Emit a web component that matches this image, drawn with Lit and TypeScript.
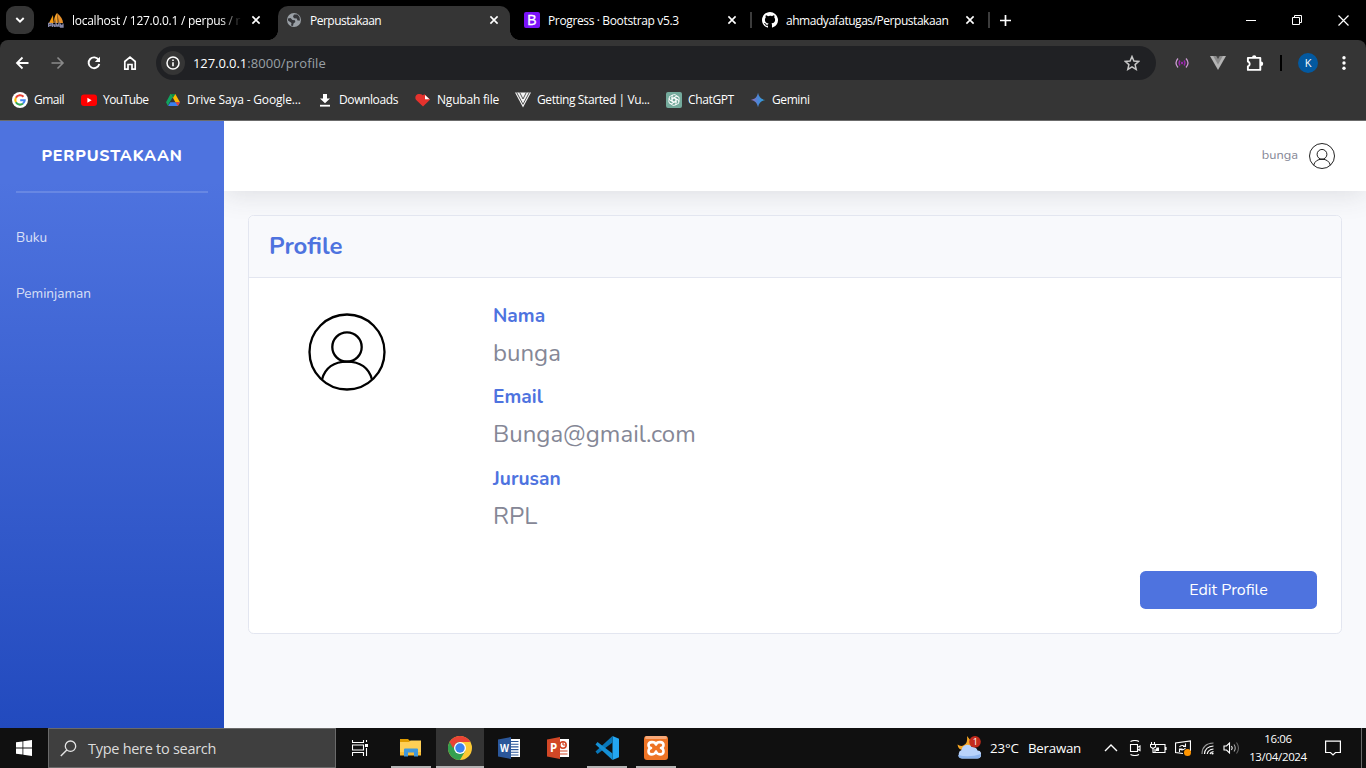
import { LitElement, html, css, svg, TemplateResult } from "lit";
import { customElement } from "lit/decorators.js";
import { styleMap } from "lit/directives/style-map.js";

const icon = (w: number, h: number, body: unknown, box = `0 0 ${w} ${h}`) =>
  html`<svg width=${w} height=${h} viewBox=${box} fill="none">${body}</svg>`;

const closeX = icon(10, 10, svg`<path d="M1.4 1.4 8.6 8.6M8.6 1.4 1.4 8.6" stroke="#fff" stroke-width="1.6"/>`);

const sails = icon(16, 16, svg`
  <path d="M1 11 5 3 5.500 11Z" fill="#f89c0e"/><path d="M5.500 11C6 7 7 3 9 1L10 11Z" fill="#f5a12a"/>
  <path d="M9 1C13 4 15 8 15 11H10.500Z" fill="#e8912b"/><path d="M5.500 11 7 6 8 11ZM9.500 11 10 5 11.500 11Z" fill="#8a5a22"/>
  <path d="M.5 15V11.500H3V13.500H1M4.500 11V15M4.500 13H6.500V15M8 15V11.500L9.500 14 11 11.500V15M12.500 11.500V15H15V11.500M12.500 13.500H15" stroke="#8587a8" stroke-width="1.300"/>`);

const globe = icon(16, 16, svg`
  <circle cx="8" cy="8" r="7" fill="#9aa0a6"/>
  <path d="M2 6.500 4.500 6 6.500 8 9 8.300 9.300 10 7.500 11.500 7 14 5 13.500 5.500 11 2 8.500ZM8 2.500 11.500 2.500 13.500 5 14 8.500 11.500 8.500 10.800 6.500 8 6.300 7 4.500Z" fill="#35363a"/>`);

const bootstrapMark = html`<span class="bs">B</span>`;

const github = icon(16, 16, svg`<path fill="#fff" d="M8 0C3.580 0 0 3.580 0 8c0 3.540 2.290 6.530 5.470 7.590.4.070.55-.17.55-.38 0-.19-.01-.82-.01-1.490-2.010.37-2.530-.49-2.690-.94-.09-.23-.48-.94-.82-1.130-.28-.15-.68-.52-.01-.53.63-.01 1.080.58 1.230.82.72 1.210 1.870.87 2.330.66.07-.52.28-.87.51-1.070-1.780-.2-3.640-.89-3.640-3.950 0-.87.31-1.590.82-2.150-.08-.2-.36-1.020.08-2.120 0 0 .67-.21 2.200.82A7.400 7.400 0 0 1 8 3.860c.68 0 1.360.09 2 .27 1.530-1.040 2.200-.82 2.200-.82.44 1.100.16 1.920.08 2.120.51.56.82 1.270.82 2.150 0 3.070-1.870 3.750-3.650 3.950.29.25.54.73.54 1.480 0 1.070-.01 1.930-.01 2.200 0 .21.15.46.55.38A8 8 0 0 0 8 0"/>`);

const google = icon(16, 16, svg`
  <circle cx="8" cy="8" r="8" fill="#fff"/>
  <g stroke-width="2.100"><path d="M11.500 4.700A4.700 4.700 0 0 0 3.900 5.700" stroke="#ea4335"/>
  <path d="M3.900 5.700A4.700 4.700 0 0 0 3.900 10.300" stroke="#fbbc05"/>
  <path d="M3.900 10.300A4.700 4.700 0 0 0 11 11.500" stroke="#34a853"/>
  <path d="M11 11.500A4.700 4.700 0 0 0 12.700 8.200H8.200" stroke="#4285f4"/></g>`);

const youtube = icon(16, 16, svg`<rect x="0" y="2.500" width="16" height="11.500" rx="3" fill="#f00"/><path d="M6.400 5.700 10.600 8.200 6.400 10.700Z" fill="#fff"/>`);

const drive = icon(16, 16, svg`
  <path d="M5.500 2H9.700L4.200 11 3 14 1 10.200Z" fill="#11a35f"/><path d="M5.700 2H10.300L15 10.300H10.400Z" fill="#ffba00"/>
  <path d="M5.500 2H10.300L8 6Z" fill="#0a8a47"/>
  <path d="M5.300 10.300H15L12.900 14H3.100Z" fill="#3b80f0"/><path d="M10.400 10.300H15L12.900 14Z" fill="#ea4335"/>`);

const download = icon(16, 16, svg`<path d="M6 2H10V6.500H13L8 11.300 3 6.500H6Z" fill="#fff"/><path d="M3 13.700H13" stroke="#fff" stroke-width="1.800"/>`);

const heart = icon(16, 16, svg`<path d="M8 14.500 1.200 8A4 4 0 0 1 1 3.500C2.600 1.700 6 1.700 7.800 3.200L9.500 2.200 15.200 7.500Z" fill="#e5322d"/><path d="M10 3V7.300H14.500Z" fill="#fff"/>`);

const vueMark = icon(16, 16, svg`
  <path d="M0 .5H16L8 15.500Z" fill="#f4f4f4"/>
  <path d="M1.700 .5 8 12.300 14.300 .5M4.700 .5 8 7 11.300 .5" stroke="#444" stroke-width=".9"/>`);

const gpt = icon(16, 16, svg`
  <rect width="16" height="16" rx="2" fill="#74aa9c"/>
  <g stroke="#fff" stroke-width=".9">${[0, 60, 120, 180, 240, 300].map((a) => svg`<path transform="rotate(${a} 8 8)" d="M6 9.200V4.700A2.300 2.300 0 0 1 10 3.300L12 4.600M6.200 6.800 9.700 4.800"/>`)}</g>`);

const gemini = icon(16, 16, svg`
  <defs><linearGradient id="gm" x1="0" y1="0" x2="1" y2="0"><stop offset="0" stop-color="#9a6bb8"/><stop offset=".5" stop-color="#4a86d8"/><stop offset="1" stop-color="#2ba5d8"/></linearGradient></defs>
  <path d="M8 .8C8.800 5 11 7.200 15.200 8 11 8.800 8.800 11 8 15.200 7.200 11 5 8.800 .8 8 5 7.200 7.200 5 8 .8Z" fill="url(#gm)"/>`);

interface Tab { title: string; fav: TemplateResult; track: number; active?: boolean; fade?: boolean; sep?: boolean; }
const tabs: Tab[] = [
  { title: "localhost / 127.0.0.1 / perpus / r", fav: sails, track: -0.26, fade: true },
  { title: "Perpustakaan", fav: globe, track: -0.5, active: true },
  { title: "Progress · Bootstrap v5.3", fav: bootstrapMark, track: -0.36, sep: true },
  { title: "ahmadyafatugas/Perpustakaan", fav: github, track: -0.46, sep: true },
];

const bookmarks: { name: string; ic: TemplateResult; w: number; track: number }[] = [
  { name: "Gmail", ic: google, w: 69, track: -0.5 },
  { name: "YouTube", ic: youtube, w: 84, track: -0.55 },
  { name: "Drive Saya - Google...", ic: drive, w: 152, track: -0.17 },
  { name: "Downloads", ic: download, w: 98, track: -0.4 },
  { name: "Ngubah file", ic: heart, w: 100, track: -0.2 },
  { name: "Getting Started | Vu...", ic: vueMark, w: 151, track: -0.4 },
  { name: "ChatGPT", ic: gpt, w: 84, track: -0.37 },
  { name: "Gemini", ic: gemini, w: 60, track: -0.4 },
];

@customElement("browser-chrome")
export class BrowserChrome extends LitElement {
  static styles = css`
    :host { display: block; height: 121px; box-sizing: border-box; background: #353535; border-bottom: 1px solid #6b6b6b;
      font: 12px/16px "Open Sans", "Noto Sans", sans-serif; color: #fff; }
    svg { display: block; flex: none; }
    .strip { display: flex; height: 40px; background: #000; }
    .search { width: 28px; height: 28px; margin: 6px 12px 0 6px; border-radius: 9px; background: #353535; display: grid; place-items: center; flex: none; }
    .tab { position: relative; box-sizing: border-box; display: flex; align-items: center; width: 238px; height: 40px; padding: 0 14px 0 11px; flex: none; }
    .tab.first { width: 226px; padding: 0 11px 0 2px; }
    .tab.active { width: 244px; padding: 0 17px 0 14px; margin-right: -3px; }
    .tab.active::before { content: ""; position: absolute; inset: 6px 6px 0 6px; background: #353535; border-radius: 10px 10px 0 0; }
    .tab.active::after { content: ""; position: absolute; left: -4px; right: -4px; bottom: 0; height: 10px;
      background: radial-gradient(circle at 0 0, transparent 9.600px, #353535 10.200px) left / 10px 10px no-repeat,
        radial-gradient(circle at 100% 0, transparent 9.600px, #353535 10.200px) right / 10px 10px no-repeat; }
    .tab > * { position: relative; }
    .title { flex: 1; margin: 0 8px; padding-top: 1px; white-space: nowrap; overflow: hidden; }
    .fade { -webkit-mask-image: linear-gradient(90deg, #000 148px, transparent 170px); }
    .tab > .sep { position: absolute; right: -1px; top: 12px; width: 2px; height: 16px; background: #3c3c3c; }
    .bs { display: block; width: 16px; height: 16px; border-radius: 2px; background: #7a12f8; font: 400 14px/16px "Liberation Sans", sans-serif; text-align: center; -webkit-text-stroke: .3px #fff; }
    .plus { margin: 15px 0 0 11px; }
    .win { margin: 0 0 0 auto; display: flex; align-items: center; }
    .win span { width: 46px; display: grid; place-items: center; }
    .bar { display: flex; align-items: center; height: 46px; background: #353535; border-radius: 8px 8px 0 0; }
    .under { background: #000; }
    .nav { display: flex; width: 156px; flex: none; }
    .nav span { width: 36px; display: grid; place-items: center; }
    .nav span:first-child { margin-left: 4px; }
    .omni { box-sizing: border-box; display: flex; align-items: center; width: 1000px; height: 34px; border-radius: 17px; background: #202124; padding: 0 16px 0 5px; font-size: 13px; flex: none; }
    .info { width: 24px; height: 24px; border-radius: 50%; background: #353535; display: grid; place-items: center; margin-right: 8px; }
    .url { flex: 1; }
    .path { color: #9aa0a6; letter-spacing: .12px; }
    .host { letter-spacing: -.08px; }
    .ext { flex: 1; display: flex; align-items: center; }
    .ext span { display: grid; place-items: center; width: 36px; flex: none; }
    .ext span:first-child { margin-left: 8px; }
    .ext .puzzle { padding-left: 1px; width: 35px; }
    .ext .rule { width: 2px; height: 16px; background: #000; margin: 0 17px 0 8px; }
    .ext .me { width: 20px; height: 20px; border-radius: 50%; background: #0359a0; font-size: 11px; line-height: 20px; margin: 0 24px 0 -1px; }
    .marks { display: flex; align-items: center; height: 28px; padding-left: 12px; }
    .mark { display: flex; align-items: center; gap: 6px; white-space: nowrap; flex: none; }
  `;
  render() {
    return html`
      <div class="strip">
        <div class="search">${icon(10, 8, svg`<path d="M1.300 2 5 5.700 8.700 2" stroke="#fff" stroke-width="1.900"/>`)}</div>
        ${tabs.map((t, i) => html`
          <div class="tab ${t.active ? "active" : ""} ${i === 0 ? "first" : ""}">
            ${t.fav}<span class="title ${t.fade ? "fade" : ""}" style=${styleMap({ letterSpacing: `${t.track}px` })}>${t.title}</span>${closeX}
            ${t.sep ? html`<i class="sep"></i>` : ""}
          </div>`)}
        <div class="plus">${icon(11, 11, svg`<path d="M5.500 0V11M0 5.500H11" stroke="#fff" stroke-width="1.700"/>`)}</div>
        <div class="win">
          <span>${icon(10, 10, svg`<path d="M0 5.500H10" stroke="#fff"/>`)}</span>
          <span>${icon(10, 10, svg`<path d="M.5 2.500H7.500V9.500H.5ZM2.500 2V.5H9.500V7.500H8" stroke="#fff"/>`)}</span>
          <span>${icon(11, 11, svg`<path d="M.5.5 10.500 10.500M10.500.5.5 10.500" stroke="#fff" stroke-width="1.200"/>`)}</span>
        </div>
      </div>
      <div class="under"><div class="bar">
        <div class="nav">
          <span>${icon(14, 14, svg`<path d="M7.500 1.500 2 7 7.500 12.500M2 7H13.500" stroke="#fff" stroke-width="1.800"/>`)}</span>
          <span>${icon(14, 14, svg`<path d="M6.500 1.500 12 7 6.500 12.500M12 7H.5" stroke="#8a8a8a" stroke-width="1.600"/>`)}</span>
          <span>${icon(14, 14, svg`<path d="M11.700 4A5.400 5.400 0 1 0 12.300 8" stroke="#fff" stroke-width="1.900"/><path d="M13 .8V6H7.800Z" fill="#fff"/>`)}</span>
          <span>${icon(14, 16, svg`<path d="M1.800 6.500 7 2 12.200 6.500V14.200H9V9.500H5V14.200H1.800Z" stroke="#fff" stroke-width="1.700"/>`)}</span>
        </div>
        <div class="omni">
          <span class="info">${icon(14, 14, svg`<circle cx="7" cy="7" r="6" stroke="#fff" stroke-width="1.500"/><path d="M7 6.200V10.200M7 3.600V5" stroke="#fff" stroke-width="1.600"/>`)}</span>
          <span class="url"><span class="host">127.0.0.1</span><span class="path">:8000/profile</span></span>
          ${icon(16, 16, svg`<path d="M8 1.500 9.900 6 14.800 6.400 11.100 9.600 12.200 14.400 8 11.800 3.800 14.400 4.900 9.600 1.200 6.400 6.100 6Z" stroke="#c7c7c7" stroke-width="1.500"/>`)}
        </div>
        <div class="ext">
          <span>${icon(14, 12, svg`<path d="M3 1.500Q-1 6 3 10.500M11 1.500Q15 6 11 10.500" stroke="#c99ad0" stroke-width="1.300"/><path d="M5 3.500Q3 6 5 8.500M9 3.500Q11 6 9 8.500" stroke="#9c27b0" stroke-width="1.300"/><circle cx="7" cy="6" r="1.200" fill="#9c27b0"/>`)}</span>
          <span>${icon(16, 14, svg`<path d="M0 0H16L8 14Z" fill="#b4b4b4"/><path d="M3.200 0H12.800L8 8.400Z" fill="#8a8a8a"/><path d="M6.200 0H9.800L8 3Z" fill="#454545"/>`)}</span>
          <span class="puzzle">${icon(18, 18, svg`<path d="M1.900 3.900H14.300V15.900H1.900V12.300A2.500 2.500 0 0 0 1.900 7.500Z" stroke="#fff" stroke-width="1.900" stroke-linejoin="round"/><path d="M6 3.500A2.200 2.200 0 0 1 10.400 3.500ZM15 7.600A2.200 2.200 0 0 1 15 12Z" fill="#fff"/>`)}</span>
          <i class="rule"></i><span class="me">K</span>
          ${icon(4, 14, svg`<circle cx="2" cy="1.800" r="1.700" fill="#fff"/><circle cx="2" cy="7" r="1.700" fill="#fff"/><circle cx="2" cy="12.200" r="1.700" fill="#fff"/>`)}
        </div>
      </div></div>
      <div class="marks">${bookmarks.map((b) => html`<div class="mark" style=${styleMap({ width: `${b.w}px`, letterSpacing: `${b.track}px` })}>${b.ic}<span>${b.name}</span></div>`)}</div>`;
  }
}

const person = (size: number, sw: number) => html`<svg width=${size} height=${size} viewBox="0 0 78 78" fill="none" stroke="#000" stroke-width=${sw}>
  <circle cx="39" cy="39" r="37.500"/><circle cx="39" cy="34" r="14.700"/><path d="M14 66.500C17 55 26 48.600 39 48.600S61 55 64 66.500"/></svg>`;

@customElement("profile-page")
export class ProfilePage extends LitElement {
  static styles = css`
    :host { display: flex; height: 607px; background: #f8f9fc; font: 400 16px/24px Nunito, Lato, sans-serif; color: #858796; }
    svg { display: block; }
    .side { box-sizing: border-box; width: 224px; flex: none; background: linear-gradient(180deg, #4e73df 10%, #224abe 100%); }
    .brand { height: 70px; line-height: 70px; text-align: center; color: #fff; font-weight: 800; letter-spacing: .8px; }
    hr { margin: 0 16px 16px; border: 0; height: 2px; background: rgba(255, 255, 255, .15); }
    .link { display: block; height: 56px; line-height: 57px; padding-left: 16px; font-size: 13.600px; color: rgba(255, 255, 255, .8); }
    .main { flex: 1; overflow: hidden; }
    .top { height: 70px; box-sizing: border-box; background: #fff; box-shadow: 0 2.400px 28px 0 rgba(58, 59, 69, .15); display: flex; align-items: center; justify-content: flex-end; gap: 11px; padding: 0 31px 2px 0; font-size: 12.800px; }
    .top svg { margin-top: 2px; }
    .card { box-sizing: border-box; margin: 24px 24px 0; height: 419px; border: 1px solid #e3e6f0; border-radius: 5.600px; background: #fff; }
    .head { height: 61px; border-bottom: 1px solid #e3e6f0; background: #f8f9fc; border-radius: 5px 5px 0 0; padding-left: 20px; font: 700 24px/60px Nunito, Lato, sans-serif; color: #4e73df; }
    .body { display: flex; padding: 24px; }
    .pic { width: 220px; box-sizing: border-box; padding: 11px 0 0 35px; }
    dl { margin: 0; padding-top: .6px; height: 245px; box-sizing: border-box; }
    dt { font-weight: 700; font-size: 19.200px; line-height: 27px; color: #4e73df; }
    dd { margin: 0; font-size: 24px; line-height: 29px; padding: 9px 0 16.500px; }
    .foot { display: flex; justify-content: flex-end; padding: 0 24px; }
    button { width: 177px; height: 38px; border: 0; border-radius: 5.600px; background: #4e73df; color: #fff; font: 400 16px/24px Nunito, Lato, sans-serif; padding: 0; }
  `;
  render() {
    const fields = [["Nama", "bunga"], ["Email", "Bunga@gmail.com"], ["Jurusan", "RPL"]];
    return html`
      <nav class="side"><div class="brand">PERPUSTAKAAN</div><hr /><a class="link">Buku</a><a class="link">Peminjaman</a></nav>
      <div class="main">
        <header class="top"><span>bunga</span>${person(26, 2.600)}</header>
        <section class="card">
          <div class="head">Profile</div>
          <div class="body"><div class="pic">${person(78, 2.300)}</div>
            <dl>${fields.map(([k, v]) => html`<dt>${k}</dt><dd>${v}</dd>`)}</dl></div>
          <div class="foot"><button>Edit Profile</button></div>
        </section>
      </div>`;
  }
}

const apps: { ic: TemplateResult; open?: boolean; on?: boolean }[] = [
  { open: true, ic: icon(24, 24, svg`
    <path d="M1 3H9L11 5H22V9H1Z" fill="#e09c00"/><path d="M1 6H10L11.500 4.500H22V19H1Z" fill="#ffcf55"/><path d="M1 16H22V19.500H1Z" fill="#f8bd36"/>
    <path d="M5 20.500V13.500Q5 12.500 6 12.500H18Q19 12.500 19 13.500V20.500H15V16.500H9V20.500Z" fill="#3f98dc"/>`) },
  { open: true, on: true, ic: icon(24, 24, svg`
    <circle cx="12" cy="12" r="12" fill="#fcc934"/>
    <path d="M1.600 6A12 12 0 0 0 12 24L17.200 15 12 12Z" fill="#34a04f"/>
    <path d="M1.600 6 6.800 15 12 12V6Z" fill="#34a04f"/><path d="M1.600 6A12 12 0 0 1 22.400 6H12A6 6 0 0 0 6.500 10L5 12Z" fill="#ea4335"/>
    <circle cx="12" cy="12" r="6" fill="#fff"/><circle cx="12" cy="12" r="4.700" fill="#3b82f0"/>`) },
  { ic: icon(24, 24, svg`
    <path d="M12 3H23V21H12Z" fill="#fff"/><path d="M14 5.500H21.500M14 8.200H21.500M14 10.900H21.500M14 13.600H21.500M14 16.300H21.500M14 19H21.500" stroke="#2b579a" stroke-width="1.100"/>
    <path d="M1 3.500 14 1V23L1 20.500Z" fill="#2b579a"/><text x="3" y="16" font-family="Open Sans" font-weight="700" font-size="10.500" fill="#fff" textLength="9" lengthAdjust="spacingAndGlyphs">W</text>`) },
  { ic: icon(24, 24, svg`
    <path d="M12 3H23V21H12Z" fill="#fff"/><circle cx="17" cy="9" r="3.200" stroke="#d24726" stroke-width="1.500"/><path d="M17 9V5.500M17 9H20.500M14 15H21.500M14 18H21.500" stroke="#d24726" stroke-width="1.200"/>
    <path d="M1 3.500 14 1V23L1 20.500Z" fill="#d24726"/><text x="4" y="16" font-family="Open Sans" font-weight="700" font-size="11.500" fill="#fff">P</text>`) },
  { open: true, ic: icon(24, 24, svg`
    <path d="M17.500 0 24 2.800V21.200L17.500 24Z" fill="#23a6f2"/><path d="M17.500 6.500V0L.5 15.500 2.500 18Z" fill="#0877b9"/><path d="M17.500 17.500V24L.5 8.500 2.500 6Z" fill="#1590d5"/>`) },
  { open: true, ic: icon(24, 24, svg`
    <rect width="24" height="24" rx="3" fill="#ee7425"/><rect x="1" width="22" height="3" rx="1.500" fill="#f7a878"/>
    <path d="M12 8.500C11 5.200 4.500 5.200 4.500 9Q4.500 11.500 7 12Q4.500 12.500 4.500 15.500C4.500 19.300 11 19.300 12 15.500C13 19.300 19.500 19.300 19.500 15.500Q19.500 12.500 17 12Q19.500 11.500 19.500 9C19.500 5.200 13 5.200 12 8.500Z" stroke="#fff" stroke-width="2.600" stroke-linejoin="round"/>`) },
];

@customElement("task-bar")
export class TaskBar extends LitElement {
  static styles = css`
    :host { display: flex; height: 40px; background: #101010; color: #fff; font: 12px/18px "Open Sans", "Noto Sans", sans-serif; }
    svg { display: block; flex: none; }
    .start, .view { width: 48px; display: grid; place-items: center; flex: none; }
    .find { box-sizing: border-box; width: 288px; flex: none; border: 1px solid #6a6a6a; background: #3f3f3f; display: flex; align-items: center; gap: 11px; padding-left: 11px; color: #dcdcdc; font-size: 14.500px; letter-spacing: -.28px; }
    .find span { padding-top: 2px; }
    .apps { display: flex; gap: 1px; margin-left: 3px; }
    .app { position: relative; width: 48px; display: grid; place-items: center; }
    .app.on { background: #343434; }
    .app.open::after { content: ""; position: absolute; left: 4px; right: 4px; bottom: 0; height: 2px; background: #b4b4b4; }
    .app.on::after { left: 0; right: 0; }
    .weather { display: flex; align-items: center; margin-left: 277px; font-size: 13.300px; width: 147px; white-space: nowrap; flex: none; }
    .deg { margin: 0 10px 0 9px; width: 28px; letter-spacing: -.1px; }
    .sky { letter-spacing: -.25px; }
    .tray { display: flex; align-items: center; flex: none; gap: 9px; }
    .tray svg:nth-child(3) { margin-right: -1px; }
    .tray svg:nth-child(2) { margin-left: 1px; margin-right: -1px; }
    .tray svg:nth-child(4) { margin-right: 1px; }
    .clock { width: 72px; margin-left: 2px; text-align: center; font-size: 11.500px; letter-spacing: -.33px; padding-top: 2px; flex: none; }
    .note { display: grid; place-items: center; width: 38px; flex: none; }
    .end { width: 1px; background: #6a6a6a; margin-left: 9px; }
  `;
  render() {
    return html`
      <div class="start">${icon(16, 16, svg`<path d="M0 2.300 6.500 1.400V7.500H0ZM7.300 1.300 16 0V7.500H7.300ZM0 8.500H6.500V14.600L0 13.700ZM7.300 8.500H16V16L7.300 14.800Z" fill="#fff"/>`)}</div>
      <div class="find">${icon(17, 17, svg`<circle cx="10.500" cy="6.200" r="5.200" stroke="#e4e4e4" stroke-width="1.300"/><path d="M6.800 9.900.8 16" stroke="#e4e4e4" stroke-width="1.400"/>`)}<span>Type here to search</span></div>
      <div class="view">${icon(16, 16, svg`<path d="M.5 0V2.500H11.500V0M.5 16V12.500H11.500V16M.5 5H11.500V10H.5Z" stroke="#fff" stroke-width="1.100"/><path d="M14.500 0V2M14.500 8V16" stroke="#fff" stroke-width="1.100"/><path d="M13 4H16V7H13Z" fill="#fff"/>`)}</div>
      <div class="apps">${apps.map((a) => html`<div class="app ${a.open ? "open" : ""} ${a.on ? "on" : ""}">${a.ic}</div>`)}</div>
      <div class="weather">
        ${icon(24, 24, svg`
          <path d="M10 0Q11 7 7 9Q4 11 .5 8.500Q1 14 7 14L14 11V5Z" fill="#f5a623"/>
          <path d="M5 22.500A4.500 4.500 0 0 1 4.500 14A6 6 0 0 1 15 11A5 5 0 0 1 20.500 14.500A4 4 0 0 1 20 22.500Z" fill="#b9d3fa"/><path d="M1 19Q12 22 24 18Q24 22.500 20 22.500H5Q1.500 22.500 1 19Z" fill="#8db5ee"/>
          <circle cx="18" cy="5.800" r="5.800" fill="#c42b1c"/><text x="15.800" y="9.200" font-family="Open Sans" font-size="9" fill="#fff">1</text>`)}
        <span class="deg">23°C</span><span class="sky">Berawan</span>
      </div>
      <div class="tray">
        ${icon(14, 16, svg`<path d="M1 11 7 5 13 11" stroke="#fff" stroke-width="1.400"/>`)}
        ${icon(14, 16, svg`<path d="M2.500 4.500H9.500V11.500H2.500ZM9.500 7.500 12 6V10.500L9.500 9M2.500 1.500Q7-.5 11 1.500M2.500 14.500Q7 16.500 11 14.500" stroke="#fff" stroke-width="1.100"/>`)}
        ${icon(17, 16, svg`<path d="M6 4.500H15V12.500H5V9M16 7V10M1.500 2V4M4.500 2V4M.5 4.500H5.500V7L3 8.500 .5 7ZM3 8V12.500H5" stroke="#fff" stroke-width="1.100"/><path d="M6.500 7.500H9V11H5.500Z" fill="#fff"/>`)}
        ${icon(16, 16, svg`<path d="M8 13.500 .5 12.500V3L15.500 1V11" stroke="#fff" stroke-width="1.200"/><path d="M4.500 7Q6 4.500 10 6.200M10.500 3.500V6.500H8M10.500 8Q8 11 5 9.200M4.500 12V9H7.500" stroke="#fff" stroke-width="1.100"/><circle cx="12.500" cy="12.500" r="3.500" fill="#ff9500"/>`)}
        ${icon(13, 16, svg`<path d="M1 14Q1 3.500 12.500 3" stroke="#999" stroke-width="1.100"/><path d="M3.500 14Q4 6.500 12.500 6M6.200 14Q7 9.500 12.500 9M9 14Q9.500 12 12.500 11.500" stroke="#fff" stroke-width="1.200"/><circle cx="11.500" cy="13.500" r="1.100" fill="#fff"/>`)}
        ${icon(17, 16, svg`<path d="M1 6H3.500L6.500 3V13L3.500 10H1Z" stroke="#fff" stroke-width="1.100"/><path d="M8.500 6Q10 8 8.500 10" stroke="#fff" stroke-width="1.100"/><path d="M11 4.500Q13.500 8 11 11.500" stroke="#aaa" stroke-width="1.100"/><path d="M13.500 2.500Q17.500 8 13.500 13.500" stroke="#666" stroke-width="1.100"/>`)}
      </div>
      <div class="clock">16:06<br />13/04/2024</div>
      <div class="note">${icon(16, 16, svg`<path d="M.6 1.100H15.400V12.500H10.500L8 15 5.500 12.500H.6Z" stroke="#fff" stroke-width="1.200"/>`)}</div>
      <i class="end"></i>`;
  }
}

@customElement("app-root")
export class AppRoot extends LitElement {
  static styles = css`:host { display: block; width: 1366px; height: 768px; overflow: hidden; }`;
  render() {
    return html`<browser-chrome></browser-chrome><profile-page></profile-page><task-bar></task-bar>`;
  }
}
